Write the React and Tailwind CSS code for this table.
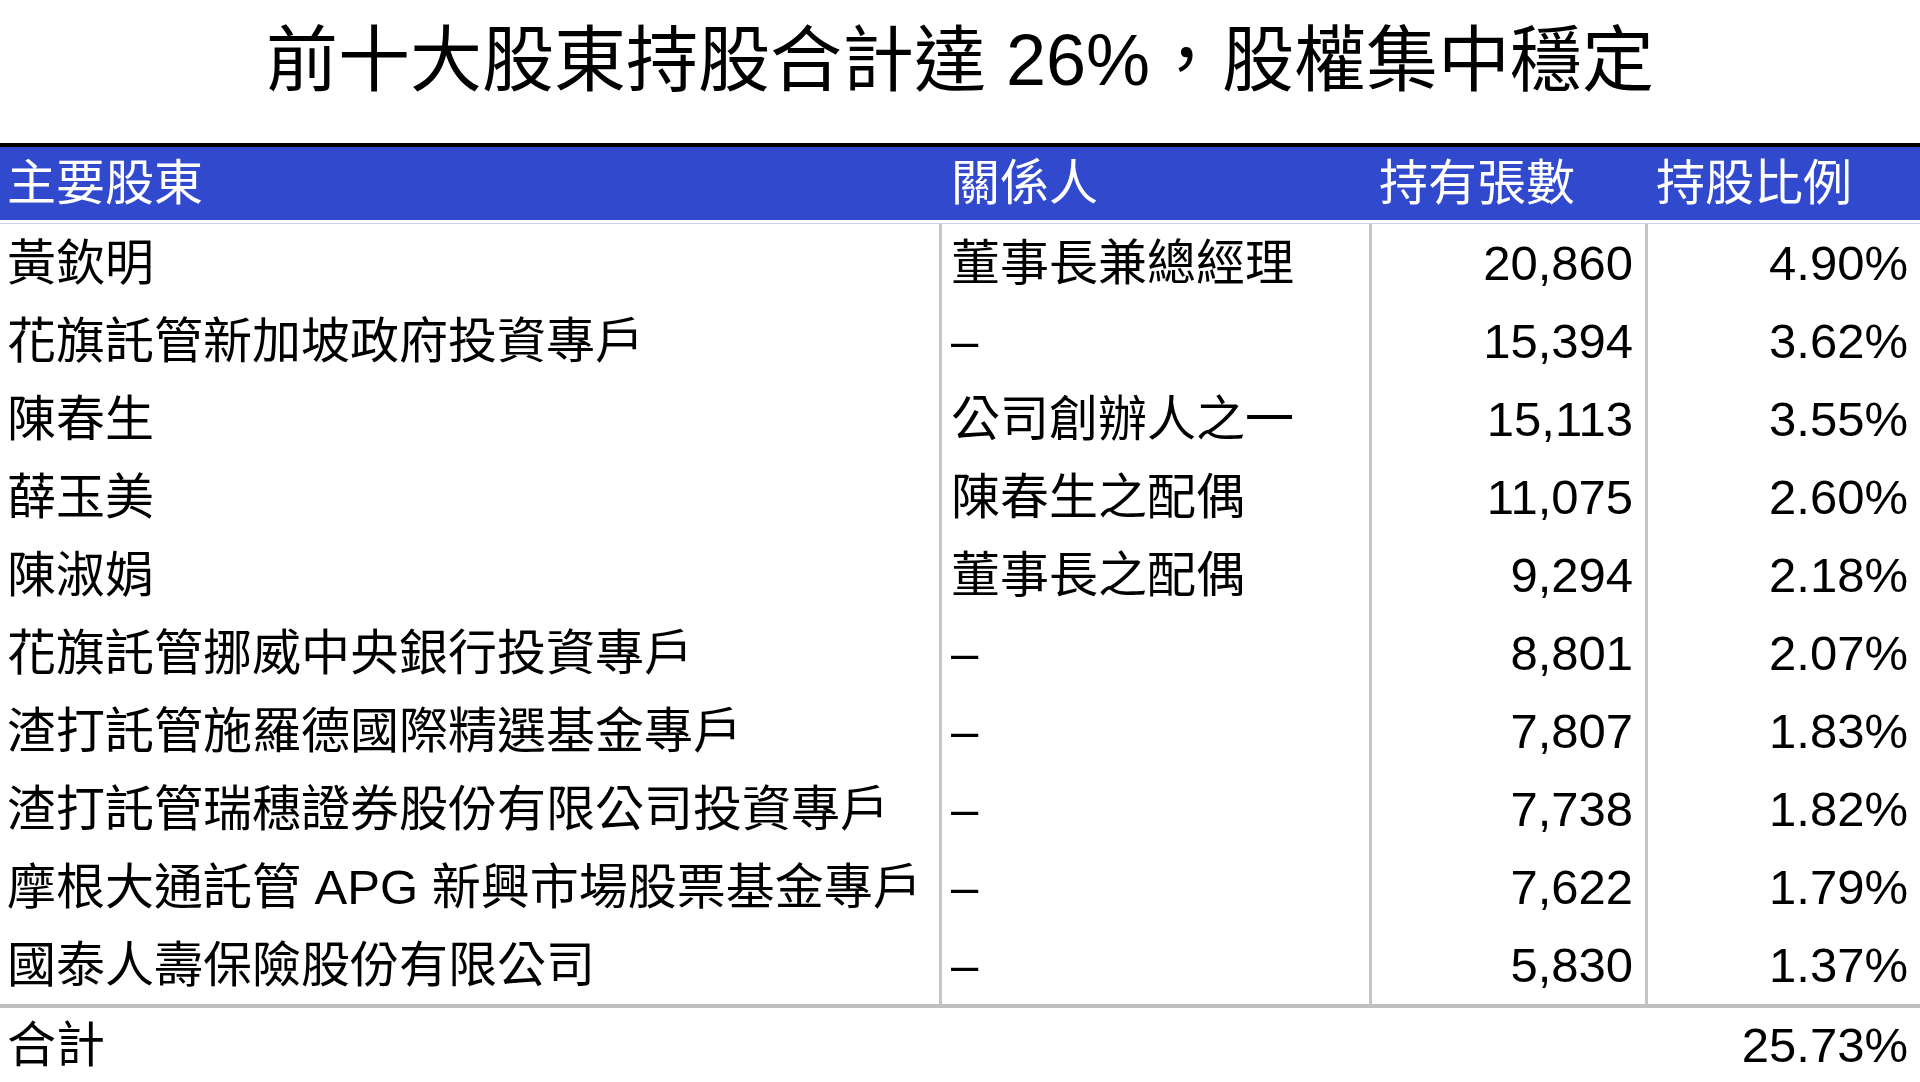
import React from "react";

const rows = [
  ["黃欽明", "董事長兼總經理", "20,860", "4.90%"],
  ["花旗託管新加坡政府投資專戶", "–", "15,394", "3.62%"],
  ["陳春生", "公司創辦人之一", "15,113", "3.55%"],
  ["薛玉美", "陳春生之配偶", "11,075", "2.60%"],
  ["陳淑娟", "董事長之配偶", "9,294", "2.18%"],
  ["花旗託管挪威中央銀行投資專戶", "–", "8,801", "2.07%"],
  ["渣打託管施羅德國際精選基金專戶", "–", "7,807", "1.83%"],
  ["渣打託管瑞穗證券股份有限公司投資專戶", "–", "7,738", "1.82%"],
  ["摩根大通託管 APG 新興市場股票基金專戶", "–", "7,622", "1.79%"],
  ["國泰人壽保險股份有限公司", "–", "5,830", "1.37%"],
];

export default function App() {
  return (
    <div className="w-[1920px] h-[1082px] bg-white text-black overflow-hidden font-['Liberation_Sans','Noto_Sans_CJK_TC',sans-serif]">
      <div className="h-[143px] pt-[24px] text-center text-[72px] leading-[72px] whitespace-nowrap">
        前十大股東持股合計達 26%，股權集中穩定
      </div>
      <div className="h-[4px] bg-black" />
      <div className="h-[73px] bg-[#3149cc] text-white text-[49px] leading-[49px] grid grid-cols-[939px_430px_276px_275px]">
        <div className="flex items-center pl-[7px]">主要股東</div>
        <div className="flex items-center pl-[12px]">關係人</div>
        <div className="flex items-center pl-[10px]">持有張數</div>
        <div className="flex items-center pl-[11px]">持股比例</div>
      </div>
      <div className="h-[3px] bg-white" />
      <div className="h-[1px] bg-[#c9cdf0]" />
      <div className="text-[49px] leading-[49px]">
        {rows.map((r, i) => (
          <div key={i} className="h-[78px] grid grid-cols-[939px_430px_276px_275px]">
            <div className="flex items-center pl-[7px] whitespace-nowrap">{r[0]}</div>
            <div className="flex items-center pl-[9px] border-l-[3px] border-[#c4c4c4] whitespace-nowrap">{r[1]}</div>
            <div className="flex items-center justify-end pr-[12px] border-l-[3px] border-[#c4c4c4]">{r[2]}</div>
            <div className="flex items-center justify-end pr-[12px] border-l-[3px] border-[#c4c4c4]">{r[3]}</div>
          </div>
        ))}
      </div>
      <div className="h-[4px] bg-[#bfbfbf]" />
      <div className="h-[74px] flex items-center justify-between pl-[7px] pr-[12px] text-[49px] leading-[49px]">
        <span>合計</span>
        <span>25.73%</span>
      </div>
    </div>
  );
}
